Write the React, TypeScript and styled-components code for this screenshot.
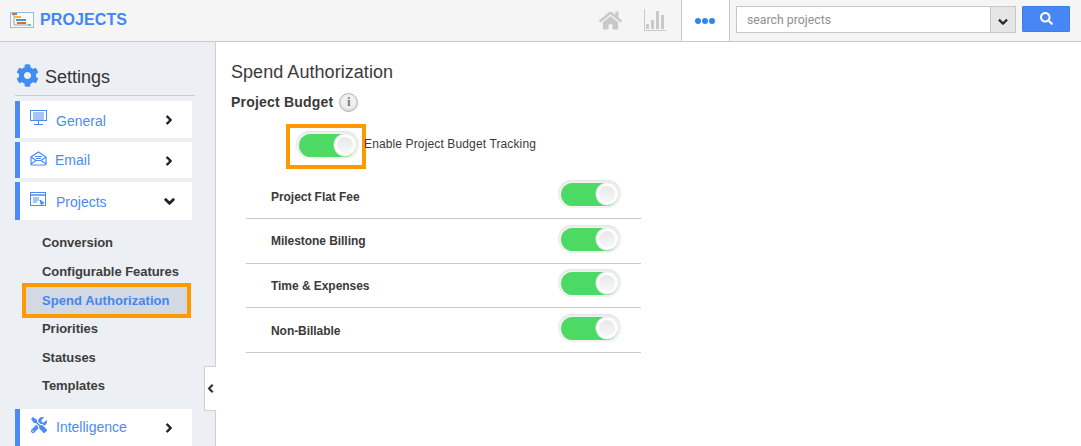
import styled, { createGlobalStyle } from "styled-components"
import { Fragment } from "react"
import { FaChevronDown, FaChevronLeft, FaChevronRight, FaCog, FaHome, FaSearch, FaTools } from "react-icons/fa"

const GlobalStyle = createGlobalStyle`
    html, body {
        margin: 0;
        padding: 0;
        background: #fff;
        overflow: hidden;
    }
    * {
        box-sizing: border-box;
    }
`;

const Page = styled.div`
    width: 1081px;
    height: 446px;
    display: flex;
    flex-flow: column nowrap;
    overflow: hidden;
    font-family: "Liberation Sans", Arial, sans-serif;
    color: #333;
`;

const Header = styled.header`
    flex: 0 0 42px;
    display: flex;
    align-items: stretch;
    background: #f5f5f5;
    border-bottom: 1px solid #c8c8c8;
`;

const Brand = styled.div`
    display: flex;
    align-items: center;
    gap: 6px;
    padding: 0 0 2px 10px;
    flex: 1;
    font-size: 16px;
    font-weight: bold;
    letter-spacing: 0.1px;
    color: #4285f4;
`;

const HeaderIcon = styled.div`
    display: flex;
    align-items: center;
    margin: 0 22px 1px 0;
`;

const MoreTab = styled.div`
    width: 49px;
    display: flex;
    align-items: center;
    justify-content: center;
    gap: 1px;
    padding-right: 2px;
    margin-left: -7px;
    background: #fff;
    border-left: 1px solid #c8c8c8;
    border-right: 1px solid #c8c8c8;
`;

const Dot = styled.span`
    width: 6px;
    height: 6px;
    border-radius: 50%;
    background: #2e86f5;
`;

const SearchArea = styled.div`
    display: flex;
    align-items: flex-start;
    padding: 6px 11px 0 6px;
`;

const SearchBox = styled.div`
    width: 280px;
    height: 27px;
    display: flex;
    border: 1px solid #c8c8c8;
    background: #fff;
`;

const SearchText = styled.div`
    flex: 1;
    padding-left: 10px;
    font-family: Roboto, sans-serif;
    font-size: 12.3px;
    line-height: 27px;
    color: #8f8f8f;
`;

const SearchCaret = styled.div`
    width: 25px;
    display: flex;
    align-items: flex-end;
    justify-content: center;
    padding-bottom: 5px;
    color: #2b2b2b;
    background: #e6e6e6;
    border-left: 1px solid #c8c8c8;
`;

const SearchButton = styled.div`
    width: 48px;
    height: 26px;
    margin-left: 6px;
    display: flex;
    align-items: center;
    justify-content: center;
    padding-bottom: 2px;
    color: #fff;
    background: #4787f5;
    border: 1px solid #3f7de6;
    border-radius: 1px;
`;

const Body = styled.div`
    flex: 1;
    display: flex;
    min-height: 0;
`;

const Sidebar = styled.aside`
    position: relative;
    flex: 0 0 216px;
    padding: 20px 20px 0 15px;
    background: #eceff4;
    border-right: 1px solid #cfcfcf;
`;

const SettingsTitle = styled.div`
    display: flex;
    align-items: center;
    gap: 6px;
    height: 34px;
    padding: 0 0 3px 1px;
    border-bottom: 1px solid #c9ccd1;
    font-size: 18px;
    color: #333;
`;

const GearWrap = styled.div`
    display: flex;
    margin-top: -3px;
    color: #3f8cf3;
`;

const MenuItem = styled.div<{ $top: number; $height: number }>`
    display: flex;
    align-items: center;
    width: 177px;
    height: ${p => p.$height}px;
    margin-top: ${p => p.$top}px;
    padding-left: 8px;
    background: #fff;
    border-left: 5px solid #4c8bf5;
    font-size: 14px;
    color: #4c8bf5;
`;

const MenuIcon = styled.div`
    width: 21px;
    display: flex;
    justify-content: center;
    margin-top: -4px;
`;

const MenuLabel = styled.span<{ $gap: number; $drop: number }>`
    flex: 1;
    margin: ${p => p.$drop}px 0 0 ${p => p.$gap}px;
`;

const MenuArrow = styled.div`
    width: 28px;
    display: flex;
    align-items: center;
    margin-top: 1px;
    color: #222;
`;

const SubMenu = styled.div`
    display: flex;
    flex-flow: column nowrap;
    margin: 9px 0 8px;
`;

const SubItem = styled.div`
    height: 28.6px;
    padding-left: 27px;
    font-size: 13px;
    font-weight: bold;
    line-height: 28px;
    letter-spacing: -0.05px;
    color: #3d3d3d;
`;

const ActiveSubItem = styled.div`
    width: 169px;
    height: 35px;
    margin: -3px 0 -3px 7px;
    padding-left: 16px;
    background: #d3d9e3;
    border: 4px solid #f90;
    font-size: 13px;
    font-weight: bold;
    line-height: 27px;
    letter-spacing: 0.05px;
    color: #4285f4;
`;

const CollapseHandle = styled.div`
    position: absolute;
    right: -1px;
    top: 324px;
    width: 12px;
    height: 45px;
    display: flex;
    align-items: center;
    justify-content: center;
    color: #222;
    background: #fff;
    border: 1px solid #cfcfcf;
    border-right: none;
`;

const Main = styled.main`
    flex: 1;
    padding: 20px 0 0 15px;
`;

const Title = styled.h1`
    margin: 0;
    font-size: 18px;
    font-weight: normal;
    line-height: 21px;
    letter-spacing: 0.05px;
    color: #3a3a3a;
`;

const SectionTitle = styled.div`
    display: flex;
    align-items: center;
    gap: 6px;
    margin-top: 9px;
    height: 20px;
    font-size: 14px;
    font-weight: bold;
    letter-spacing: 0.2px;
    color: #3a3a3a;
`;

const InfoBadge = styled.span`
    width: 19px;
    height: 19px;
    display: flex;
    align-items: center;
    justify-content: center;
    border: 1px solid #b5b5b5;
    border-radius: 50%;
    background: #efefef;
    box-shadow: inset 0 -1px 2px #ccc;
    font-family: "Liberation Serif", serif;
    font-size: 13px;
    font-weight: bold;
    color: #777;
`;

const EnableRow = styled.div`
    display: flex;
    align-items: center;
    margin: 12px 0 0 55px;
    font-size: 12px;
    letter-spacing: 0.13px;
    color: #3a3a3a;
`;

const EnableLabel = styled.span`
    margin-top: -6px;
`;

const Highlight = styled.div`
    width: 80px;
    height: 45px;
    display: flex;
    align-items: center;
    padding: 0 0 3px 6px;
    margin-right: -2px;
    border: 4px solid #f90;
`;

const Toggle = styled.div`
    width: 63px;
    height: 28px;
    padding: 3px 3px 2px;
    background: #f2f2f2;
    border-radius: 14px;
    box-shadow: inset 0 1px 2px #e0e0e0;
`;

const Track = styled.div`
    height: 23px;
    display: flex;
    justify-content: flex-end;
    background: #4cd964;
    border-radius: 12px;
`;

const Knob = styled.div`
    width: 22px;
    height: 22px;
    border: 3px solid #fff;
    border-radius: 50%;
    background: linear-gradient(#e8e8e8, #f7f7f7);
    box-shadow: 0 0 0 0.5px #e4e4e4;
`;

const Rows = styled.div`
    width: 395px;
    margin: 5.5px 0 0 15px;
`;

const Row = styled.div`
    height: 44.6px;
    display: flex;
    align-items: center;
    justify-content: space-between;
    padding: 0 20px 0 25px;
    border-bottom: 1px solid #c9c9c9;
    font-size: 12px;
    font-weight: bold;
    letter-spacing: -0.05px;
    color: #3a3a3a;
`;

const RowLabel = styled.span`
    margin-top: 1px;
`;

const RowToggle = styled(Toggle)`
    margin-top: -4px;
`;

const menuBlue = "#4c8bf5";

const MonitorIcon = () => (
    <svg width="17" height="16" viewBox="0 0 17 16" fill="none" stroke={menuBlue}>
        <rect x="0.5" y="0.5" width="16" height="10" />
        <path d="M3 3h11M3 5h11M3 7h11M3 9h11" />
        <path d="M8.5 11v3M4 14.5h9" />
    </svg>
);

const MailIcon = () => (
    <svg width="17" height="15" viewBox="0 0 17 15" fill="none" stroke={menuBlue} strokeWidth="1.2">
        <path d="M1 6 L8.5 1 L16 6 V13 Q16 14 15 14 H2 Q1 14 1 13 Z" />
        <path d="M1 6 L6 9.5 H11 L16 6 M1 13 L6 9.5 M16 13 L11 9.5" />
        <path d="M5 5.5h7M6 7.5h5" />
    </svg>
);

const WindowIcon = () => (
    <svg width="17" height="15" viewBox="0 0 17 15" fill="none" stroke={menuBlue}>
        <rect x="0.5" y="0.5" width="15" height="13" />
        <path d="M0.5 3h15" strokeWidth="1.5" />
        <path d="M3 6h6M3 8h6M3 10h4" />
        <path d="M10 8l4 3-2 .5-.5 2z" fill={menuBlue} />
    </svg>
);

const GanttLogo = () => (
    <svg width="24" height="16" viewBox="0 0 24 16">
        <rect x="0.5" y="0.5" width="23" height="15" fill="#fbfbfb" stroke="#8fc0ea" />
        <rect x="2" y="1" width="5" height="2" fill="#dd6b2a" />
        <rect x="5" y="4" width="6" height="2" fill="#f2b632" />
        <rect x="6" y="7" width="10" height="2" fill="#3d9bd9" />
        <rect x="7" y="10" width="9" height="2" fill="#dd6b2a" />
        <path d="M4 3v10h16" stroke="#9a9a9a" fill="none" />
        <rect x="18" y="12" width="3" height="2" fill="#6fc2a8" />
    </svg>
);

const ChartIcon = () => (
    <svg width="22" height="22" viewBox="0 0 22 22" fill="#c9c9c9">
        <rect x="0" y="0" width="1" height="22" />
        <rect x="0" y="21" width="22" height="1" />
        <rect x="2" y="15" width="3" height="5" />
        <rect x="7" y="11" width="3" height="9" />
        <rect x="12" y="2" width="3" height="18" />
        <rect x="17" y="6" width="3" height="14" />
    </svg>
);

const Switch = () => (
    <Track><Knob /></Track>
);

// the chevrons in the picture are heavier than the plain glyphs
const heavy = { stroke: "currentColor", strokeWidth: 50 };

const budgetRows = ["Project Flat Fee", "Milestone Billing", "Time & Expenses", "Non-Billable"];
const subItems = ["Priorities", "Statuses", "Templates"];

const App = () => {
    return (
        <Fragment>
            <GlobalStyle />
            <Page>
                <Header>
                    <Brand>
                        <GanttLogo />
                        PROJECTS
                    </Brand>
                    <HeaderIcon><FaHome size={23} color="#c9c9c9" /></HeaderIcon>
                    <HeaderIcon><ChartIcon /></HeaderIcon>
                    <MoreTab>
                        <Dot />
                        <Dot />
                        <Dot />
                    </MoreTab>
                    <SearchArea>
                        <SearchBox>
                            <SearchText>search projects</SearchText>
                            <SearchCaret><FaChevronDown size={10} {...heavy} /></SearchCaret>
                        </SearchBox>
                        <SearchButton><FaSearch size={13} /></SearchButton>
                    </SearchArea>
                </Header>
                <Body>
                    <Sidebar>
                        <SettingsTitle>
                            <GearWrap><FaCog size={23} /></GearWrap>
                            Settings
                        </SettingsTitle>
                        <MenuItem $top={5} $height={37}>
                            <MenuIcon><MonitorIcon /></MenuIcon>
                            <MenuLabel $gap={7} $drop={2}>General</MenuLabel>
                            <MenuArrow><FaChevronRight size={10} {...heavy} /></MenuArrow>
                        </MenuItem>
                        <MenuItem $top={4} $height={36}>
                            <MenuIcon><MailIcon /></MenuIcon>
                            <MenuLabel $gap={6} $drop={0}>Email</MenuLabel>
                            <MenuArrow><FaChevronRight size={10} {...heavy} /></MenuArrow>
                        </MenuItem>
                        <MenuItem $top={4} $height={38}>
                            <MenuIcon><WindowIcon /></MenuIcon>
                            <MenuLabel $gap={7} $drop={2}>Projects</MenuLabel>
                            <MenuArrow><FaChevronDown size={11} {...heavy} /></MenuArrow>
                        </MenuItem>
                        <SubMenu>
                            <SubItem>Conversion</SubItem>
                            <SubItem>Configurable Features</SubItem>
                            <ActiveSubItem>Spend Authorization</ActiveSubItem>
                            {subItems.map(item => <SubItem key={item}>{item}</SubItem>)}
                        </SubMenu>
                        <MenuItem $top={0} $height={37}>
                            <MenuIcon><FaTools size={16} /></MenuIcon>
                            <MenuLabel $gap={7} $drop={0}>Intelligence</MenuLabel>
                            <MenuArrow><FaChevronRight size={10} {...heavy} /></MenuArrow>
                        </MenuItem>
                        <CollapseHandle><FaChevronLeft size={9} {...heavy} /></CollapseHandle>
                    </Sidebar>
                    <Main>
                        <Title>Spend Authorization</Title>
                        <SectionTitle>
                            Project Budget
                            <InfoBadge>i</InfoBadge>
                        </SectionTitle>
                        <EnableRow>
                            <Highlight>
                                <Toggle><Switch /></Toggle>
                            </Highlight>
                            <EnableLabel>Enable Project Budget Tracking</EnableLabel>
                        </EnableRow>
                        <Rows>
                            {budgetRows.map(label => (
                                <Row key={label}>
                                    <RowLabel>{label}</RowLabel>
                                    <RowToggle><Switch /></RowToggle>
                                </Row>
                            ))}
                        </Rows>
                    </Main>
                </Body>
            </Page>
        </Fragment>
    )
}

export default App;
